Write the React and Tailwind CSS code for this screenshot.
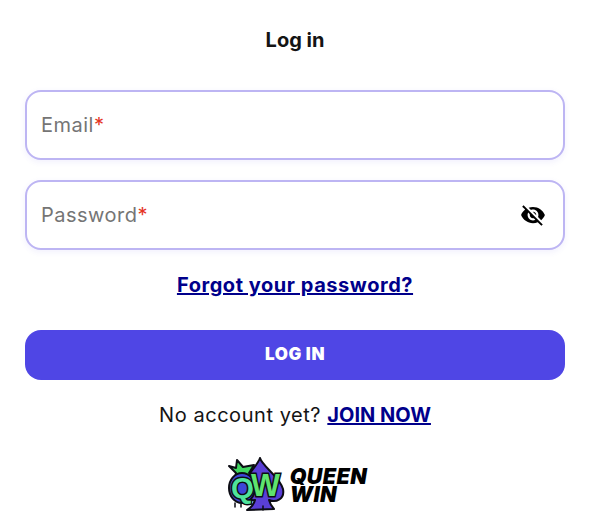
const font = { fontFamily: '"Inter", "Liberation Sans", sans-serif' }

function EyeOff() {
  return (
    <svg viewBox="0 0 24 24" className="w-[26px] h-[26px] text-black" fill="currentColor">
      <path d="M12 7c2.76 0 5 2.24 5 5 0 .65-.13 1.26-.36 1.83l2.92 2.92c1.51-1.26 2.7-2.89 3.43-4.75-1.73-4.39-6-7.5-11-7.5-1.4 0-2.74.25-3.98.7l2.16 2.16C10.74 7.13 11.35 7 12 7zM2 4.27l2.28 2.28.46.46C3.08 8.3 1.78 10.02 1 12c1.73 4.39 6 7.5 11 7.5 1.55 0 3.03-.3 4.38-.84l.42.42L19.73 22 21 20.73 3.27 3 2 4.27zM7.53 9.8l1.55 1.55c-.05.21-.08.43-.08.65 0 1.66 1.34 3 3 3 .22 0 .44-.03.65-.08l1.55 1.55c-.67.33-1.41.53-2.2.53-2.76 0-5-2.24-5-5 0-.79.2-1.53.53-2.2zm4.31-.78l3.15 3.15.02-.16c0-1.66-1.34-3-3-3l-.17.01z" />
    </svg>
  )
}

function Logo() {
  return (
    <div className="flex items-center gap-[3px] ml-[4px]">
      <svg viewBox="0 0 60 56" className="w-[60px] h-[56px]">
        {/* spade */}
        <path d="M33 1 C35 9 53 20 56 32 C58 42 49 46 42 43 C43 47 45 50 47 52 L20 53 C25 50 27 47 28 43 C22 44 14 40 15 30 C17 20 30 10 33 1 Z" fill="#5a3fd6" stroke="#0c0c14" strokeWidth="2" strokeLinejoin="round" />
        {/* crown */}
        <path d="M2 9 L9 11 L10 3 L16 10 L27 8 L22 16 L26 21 L8 21 L9 16 Z" fill="#3fd65f" stroke="#0c0c14" strokeWidth="2" strokeLinejoin="round" />
        <ellipse cx="15" cy="31" rx="13" ry="15" fill="#3d46d8" stroke="#0c0c14" strokeWidth="2" />
        <text x="4" y="41" fontFamily="Liberation Sans" fontWeight="700" fontSize="30" fill="#4fe39a" stroke="#0c0c14" strokeWidth="3" paintOrder="stroke" textLength="23" lengthAdjust="spacingAndGlyphs">Q</text>
        <text x="24" y="39" fontFamily="Liberation Sans" fontWeight="700" fontSize="32" fill="#5fe36e" stroke="#0c0c14" strokeWidth="3" paintOrder="stroke" textLength="29" lengthAdjust="spacingAndGlyphs">W</text>
        {/* drips */}
        <path d="M8 46 v4 M14 47 v3 M36 49 v4" stroke="#0c0c14" strokeWidth="1.5" strokeLinecap="round" />
      </svg>
      <div className="text-[21.5px] leading-[18px] font-black italic text-black tracking-[0.4px]" style={font}>
        <div>QUEEN</div>
        <div>WIN</div>
      </div>
    </div>
  )
}

function Field({ label, children }) {
  return (
    <div className="h-[70px] rounded-[16px] border-2 border-[#bdb5f3] bg-white shadow-[0_2px_6px_rgba(79,70,229,0.08)] flex items-center justify-between pl-[14px] pr-[17px]">
      <span className="text-[20px] text-[#757575] tracking-[0.5px]">
        {label}<span className="text-[#e5341f]">*</span>
      </span>
      {children}
    </div>
  )
}

export default function App() {
  return (
    <div className="w-[590px] h-[528px] bg-white px-[25px] pt-[28px] flex flex-col" style={font}>
      <h1 className="text-[20px] leading-[24px] font-bold text-[#141414] text-center">Log in</h1>
      <div className="mt-[38px] flex flex-col gap-[20px]">
        <Field label="Email" />
        <Field label="Password"><EyeOff /></Field>
      </div>
      <a href="#" className="mt-[22px] text-[20px] leading-[26px] font-bold tracking-[0.55px] text-[#00008b] underline text-center">
        Forgot your password?
      </a>
      <button className="mt-[32px] h-[50px] rounded-[16px] bg-[#4f46e5] text-white text-[17px] font-black tracking-[0.6px]">
        LOG IN
      </button>
      <p className="mt-[22px] text-[20px] leading-[26px] tracking-[0.55px] text-[#141414] text-center">
        No account yet? <a href="#" className="font-bold tracking-normal text-[#00008b] underline">JOIN NOW</a>
      </p>
      <div className="mt-[29px] flex justify-center">
        <Logo />
      </div>
    </div>
  )
}
